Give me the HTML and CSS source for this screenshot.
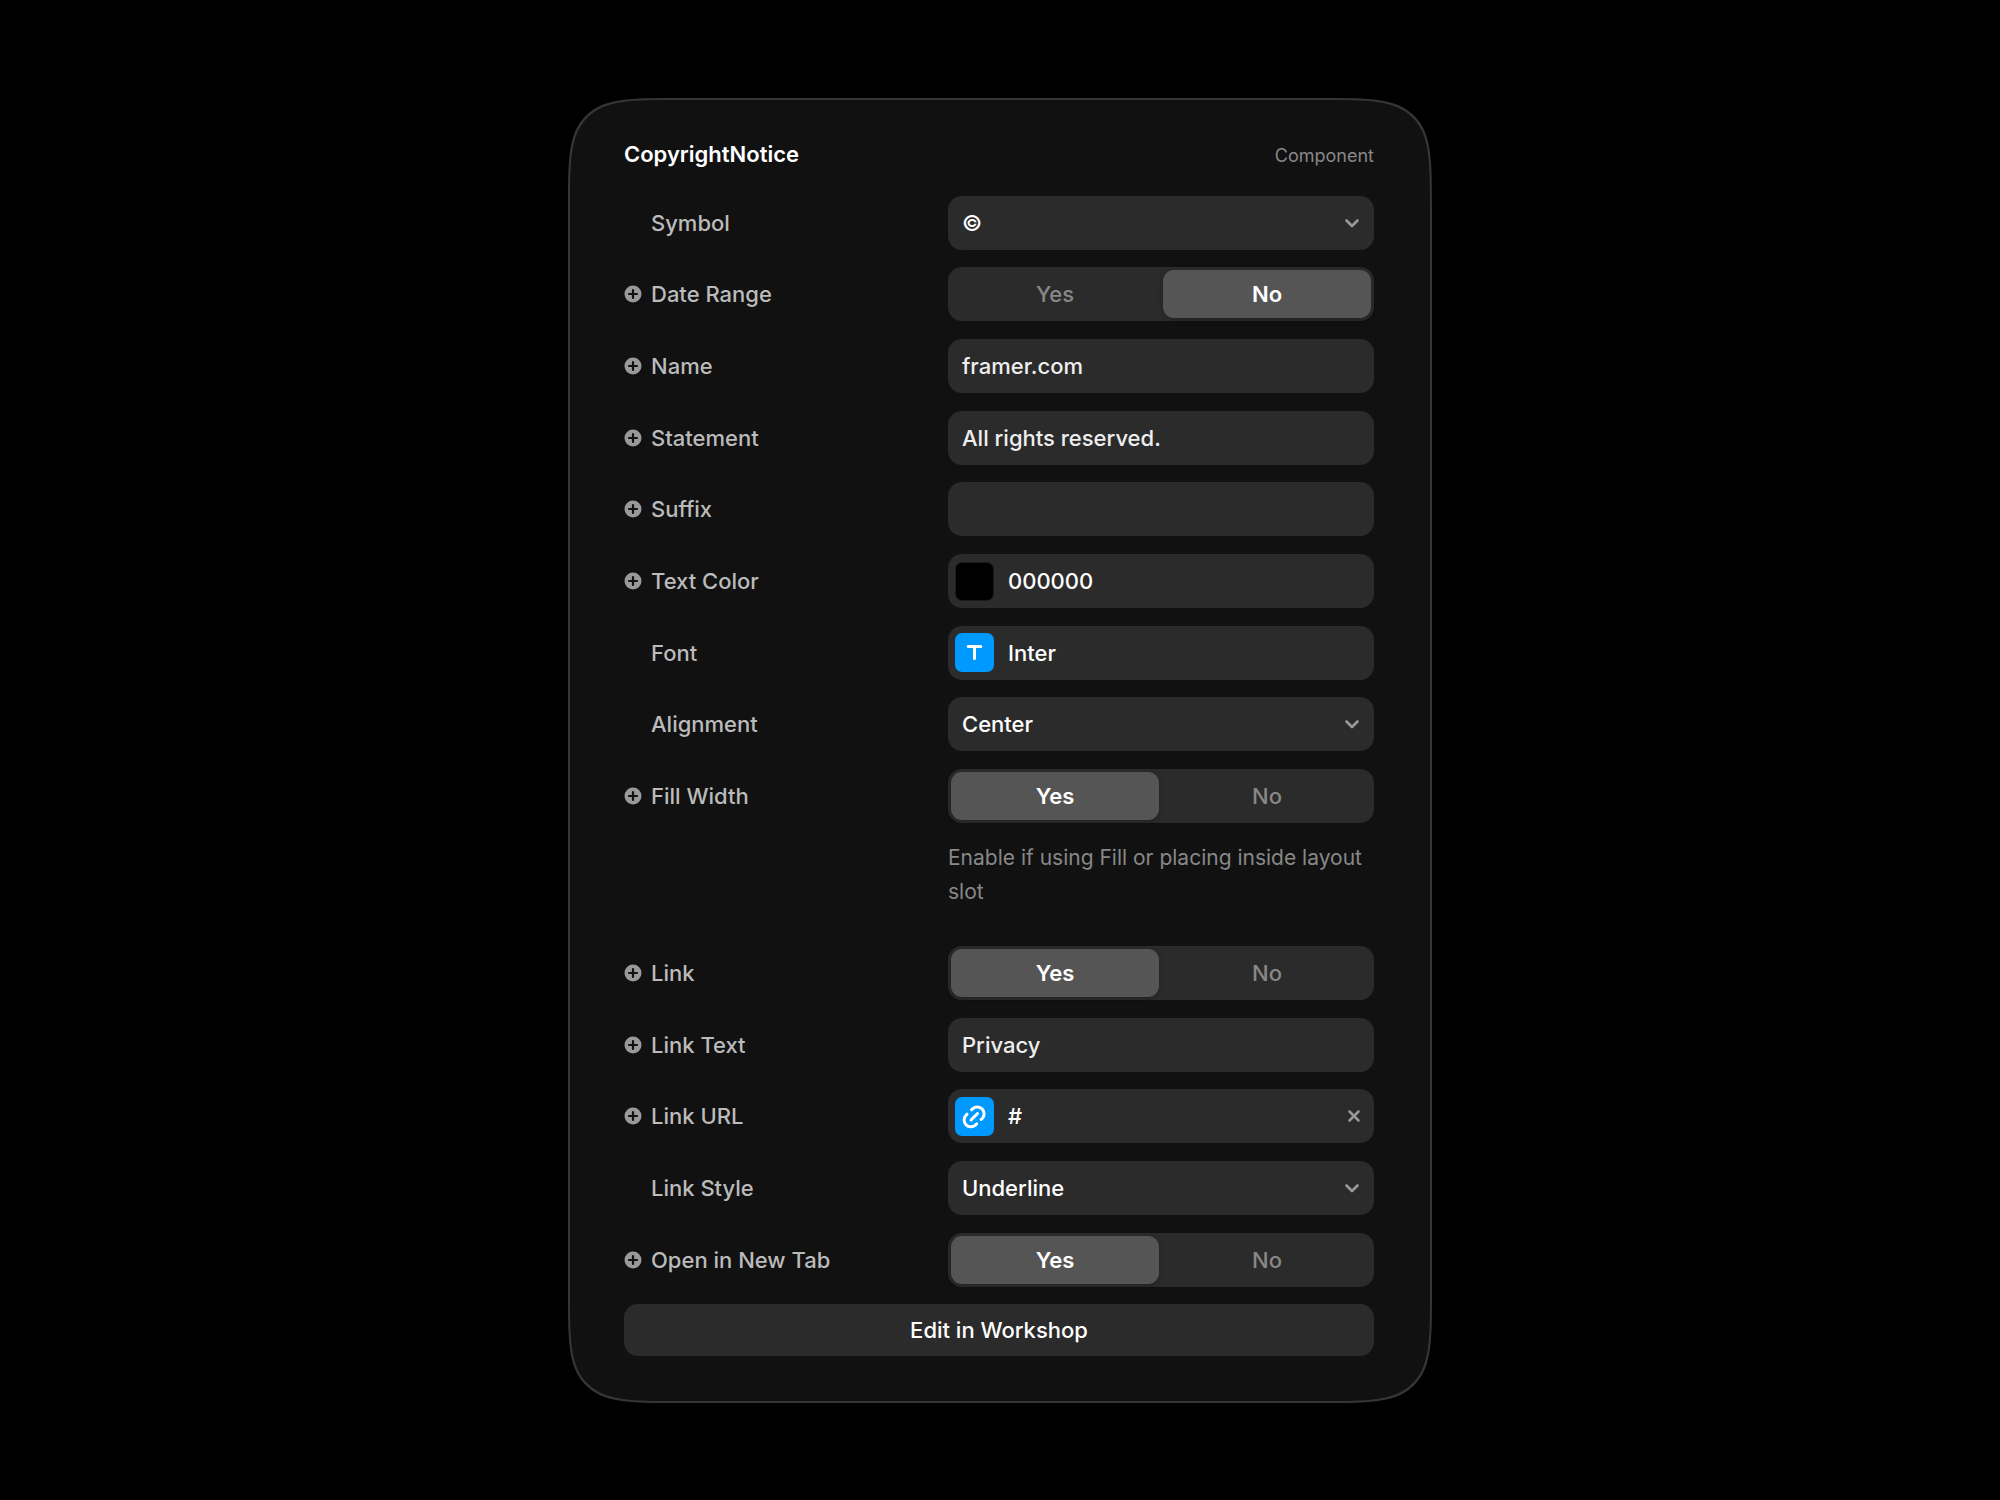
FILE: index.html
```html
<!DOCTYPE html>
<html lang="en">
<head>
<meta charset="UTF-8">
<meta name="viewport" content="width=device-width, initial-scale=1">
<title>CopyrightNotice</title>
<link rel="stylesheet" href="styles.css">
</head>
<body>
<svg class="sprite" aria-hidden="true">
  <symbol id="plus" viewBox="0 0 18 18">
    <circle cx="9" cy="9" r="8.5" fill="#999"/>
    <path d="M9 5v8M5 9h8" stroke="#111" stroke-width="2.2" stroke-linecap="round"/>
  </symbol>
  <symbol id="chevron" viewBox="0 0 16 16">
    <path d="M2.500 5.500L8 11l5.500-5.500" fill="none" stroke="#999" stroke-width="2.600" stroke-linecap="round" stroke-linejoin="round"/>
  </symbol>
</svg>

<form class="panel">
  <header class="header">
    <h1>CopyrightNotice</h1>
    <span>Component</span>
  </header>

  <div class="rows">
    <div class="row">
      <label class="name" for="symbol">Symbol</label>
      <div class="dropdown">
        <select id="symbol" class="field"><option>©</option><option>℗</option></select>
        <svg class="chevron"><use href="#chevron"/></svg>
      </div>
    </div>

    <div class="row">
      <button type="button" class="add" aria-label="Add variable"><svg><use href="#plus"/></svg></button>
      <span class="name" id="range">Date Range</span>
      <div class="segment" role="radiogroup" aria-labelledby="range">
        <label><input type="radio" name="range"><span>Yes</span></label>
        <label><input type="radio" name="range" checked><span>No</span></label>
      </div>
    </div>

    <div class="row">
      <button type="button" class="add" aria-label="Add variable"><svg><use href="#plus"/></svg></button>
      <label class="name" for="name">Name</label>
      <input type="text" id="name" class="field" value="framer.com">
    </div>

    <div class="row">
      <button type="button" class="add" aria-label="Add variable"><svg><use href="#plus"/></svg></button>
      <label class="name" for="statement">Statement</label>
      <input type="text" id="statement" class="field" value="All rights reserved.">
    </div>

    <div class="row">
      <button type="button" class="add" aria-label="Add variable"><svg><use href="#plus"/></svg></button>
      <label class="name" for="suffix">Suffix</label>
      <input type="text" id="suffix" class="field">
    </div>

    <div class="row">
      <button type="button" class="add" aria-label="Add variable"><svg><use href="#plus"/></svg></button>
      <label class="name" for="color">Text Color</label>
      <div class="field combo">
        <span class="swatch"></span>
        <input type="text" id="color" value="000000">
      </div>
    </div>

    <div class="row">
      <span class="name" id="font">Font</span>
      <button type="button" class="field combo" aria-labelledby="font font-value">
        <svg class="tile" viewBox="0 0 39 39" aria-hidden="true">
          <line x1="13.200" y1="13.500" x2="25.800" y2="13.500"/>
          <line x1="19.500" y1="13.500" x2="19.500" y2="25.500"/>
        </svg>
        <span id="font-value">Inter</span>
      </button>
    </div>

    <div class="row">
      <label class="name" for="alignment">Alignment</label>
      <div class="dropdown">
        <select id="alignment" class="field"><option>Left</option><option selected>Center</option><option>Right</option></select>
        <svg class="chevron"><use href="#chevron"/></svg>
      </div>
    </div>

    <div class="row">
      <button type="button" class="add" aria-label="Add variable"><svg><use href="#plus"/></svg></button>
      <span class="name" id="fill">Fill Width</span>
      <div class="segment" role="radiogroup" aria-labelledby="fill">
        <label><input type="radio" name="fill" checked><span>Yes</span></label>
        <label><input type="radio" name="fill"><span>No</span></label>
      </div>
      <p class="help">Enable if using Fill or placing inside layout slot</p>
    </div>

    <div class="row">
      <button type="button" class="add" aria-label="Add variable"><svg><use href="#plus"/></svg></button>
      <span class="name" id="link">Link</span>
      <div class="segment" role="radiogroup" aria-labelledby="link">
        <label><input type="radio" name="link" checked><span>Yes</span></label>
        <label><input type="radio" name="link"><span>No</span></label>
      </div>
    </div>

    <div class="row">
      <button type="button" class="add" aria-label="Add variable"><svg><use href="#plus"/></svg></button>
      <label class="name" for="link-text">Link Text</label>
      <input type="text" id="link-text" class="field" value="Privacy">
    </div>

    <div class="row">
      <button type="button" class="add" aria-label="Add variable"><svg><use href="#plus"/></svg></button>
      <label class="name" for="link-url">Link URL</label>
      <div class="field combo">
        <svg class="tile" viewBox="0 0 39 39" aria-hidden="true">
          <path d="M16 23l6.500-6.500"/>
          <path d="M16.500 12.800l1.300-1.200a6.800 6.800 0 0 1 9.600 9.600l-1.300 1.300"/>
          <path d="M12 17.200l-1.200 1.300a6.800 6.800 0 0 0 9.600 9.600l1.300-1.300"/>
        </svg>
        <input type="text" id="link-url" value="#">
        <button type="button" class="clear" aria-label="Clear link">
          <svg viewBox="0 0 16 16"><path d="M3.500 3.500l9 9M12.500 3.500l-9 9"/></svg>
        </button>
      </div>
    </div>

    <div class="row">
      <label class="name" for="link-style">Link Style</label>
      <div class="dropdown">
        <select id="link-style" class="field"><option>Underline</option><option>None</option></select>
        <svg class="chevron"><use href="#chevron"/></svg>
      </div>
    </div>

    <div class="row">
      <button type="button" class="add" aria-label="Add variable"><svg><use href="#plus"/></svg></button>
      <span class="name" id="tab">Open in New Tab</span>
      <div class="segment" role="radiogroup" aria-labelledby="tab">
        <label><input type="radio" name="tab" checked><span>Yes</span></label>
        <label><input type="radio" name="tab"><span>No</span></label>
      </div>
    </div>

    <button type="button" class="field edit">Edit in Workshop</button>
  </div>
</form>
</body>
</html>
```
FILE: styles.css
```css
* {
  box-sizing: border-box;
}
body {
  margin: 0;
  min-height: 100vh;
  display: flex;
  align-items: center;
  justify-content: center;
  background: #000;
  color: #fff;
  font-family: Inter, sans-serif;
  font-size: 22px;
  font-weight: 500;
}
button, input, select {
  font: inherit;
  color: inherit;
  margin: 0;
  padding: 0;
  border: none;
  background: none;
}
.sprite {
  position: absolute;
  width: 0;
  height: 0;
}

.panel {
  width: 100%;
  max-width: 864px;
  min-height: 87vh;
  padding: 38px 56px 44px 54px;
  display: flex;
  flex-direction: column;
  background: #111;
  border: 2px solid #363636;
  border-radius: 64px;
}
@supports (corner-shape: squircle) {
  .panel {
    border-radius: 112px;
    corner-shape: squircle;
  }
}
.header {
  display: flex;
  align-items: baseline;
  justify-content: space-between;
  margin-bottom: 24px;
  line-height: 32px;
}
.header h1 {
  margin: 0;
  font-size: 22px;
  font-weight: 600;
}
.header span {
  color: #888;
  font-size: 18px;
  font-weight: 400;
}

/* rows spread over the panel height */
.rows {
  flex: 1;
  display: flex;
  flex-direction: column;
  justify-content: space-between;
  gap: 16px;
}
.row {
  display: grid;
  grid-template-columns: 27px 297px minmax(0, 1fr);
  align-items: center;
}
.add {
  display: flex;
  cursor: pointer;
}
.add svg {
  width: 18px;
  height: 18px;
}
.name {
  grid-column: 2;
  color: #bbb;
}

.field {
  display: block;
  width: 100%;
  height: 54px;
  padding: 0 14px;
  border-radius: 14px;
  background: #2b2b2b;
  color: #eee;
  outline: none;
}
.dropdown {
  position: relative;
}
.dropdown .field {
  appearance: none;
  color: #fff;
}
.chevron {
  position: absolute;
  right: 14px;
  top: 19px;
  width: 16px;
  height: 16px;
  pointer-events: none;
}

.combo {
  display: flex;
  align-items: center;
  gap: 14px;
  padding: 0 12px 0 7px;
  color: #fff;
}
.combo input {
  flex: 1;
  min-width: 0;
  outline: none;
}
.swatch, .tile {
  flex: none;
  width: 39px;
  height: 39px;
  border-radius: 7px;
}
.swatch {
  background: #000;
  border: 1px solid #1c1c1c;
}
.tile {
  background: #09f;
  fill: none;
  stroke: #fff;
  stroke-width: 3;
  stroke-linecap: round;
}
.clear {
  display: flex;
  cursor: pointer;
}
.clear svg {
  width: 16px;
  height: 16px;
  stroke: #999;
  stroke-width: 2.5;
  stroke-linecap: round;
}

.segment {
  display: flex;
  gap: 4px;
  height: 54px;
  padding: 3px;
  border-radius: 14px;
  background: #2b2b2b;
}
.segment label {
  flex: 1;
  position: relative;
  display: flex;
}
.segment input {
  position: absolute;
  opacity: 0;
}
.segment span {
  flex: 1;
  display: flex;
  align-items: center;
  justify-content: center;
  border-radius: 11px;
  color: #888;
}
.segment input:checked + span {
  background: #555;
  color: #fff;
  font-weight: 600;
  box-shadow: 0 2px 6px rgba(0, 0, 0, 0.2);
}

.help {
  grid-column: 3;
  margin: 18px 0 19px;
  color: #888;
  font-size: 21px;
  font-weight: 400;
  line-height: 34px;
}
.edit {
  height: 52px;
  color: #fff;
  cursor: pointer;
}
```
